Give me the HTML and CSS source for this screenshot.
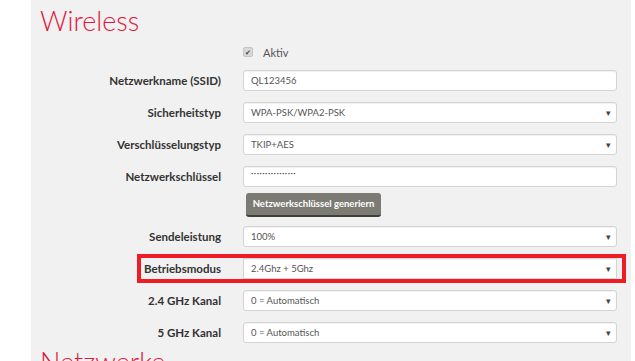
FILE: index.html
```html
<!DOCTYPE html>
<html>
    <head>
        <meta charset="utf-8">
        <link rel="stylesheet" href="styles.css">
        <title>Wireless</title>
    </head>
    <body>
        <div class="panel">
            <h1 class="pageTitle">Wireless</h1>
            <div class="form">
                <div class="row check">
                    <span class="label"></span>
                    <label class="aktiv"><span class="box">&#10004;</span>Aktiv</label>
                </div>
                <div class="row">
                    <span class="label">Netzwerkname (SSID)</span>
                    <div class="field">QL123456</div>
                </div>
                <div class="row">
                    <span class="label">Sicherheitstyp</span>
                    <div class="field select">WPA-PSK/WPA2-PSK</div>
                </div>
                <div class="row">
                    <span class="label">Verschlüsselungstyp</span>
                    <div class="field select">TKIP+AES</div>
                </div>
                <div class="row">
                    <span class="label">Netzwerkschlüssel</span>
                    <div class="field dots">&bull;&bull;&bull;&bull;&bull;&bull;&bull;&bull;&bull;&bull;&bull;&bull;&bull;&bull;&bull;&bull;</div>
                </div>
                <div class="row buttonRow">
                    <span class="label"></span>
                    <div><button type="button" class="generate">Netzwerkschlüssel generiern</button></div>
                </div>
                <div class="row">
                    <span class="label">Sendeleistung</span>
                    <div class="field select">100%</div>
                </div>
                <div class="row marked">
                    <span class="label">Betriebsmodus</span>
                    <div class="field select">2.4Ghz + 5Ghz</div>
                </div>
                <div class="row">
                    <span class="label">2.4 GHz Kanal</span>
                    <div class="field select">0 = Automatisch</div>
                </div>
                <div class="row">
                    <span class="label">5 GHz Kanal</span>
                    <div class="field select">0 = Automatisch</div>
                </div>
            </div>
            <h1 class="pageTitle next">Netzwerke</h1>
        </div>
    </body>
</html>
```

FILE: styles.css
```css
html, body {margin: 0;
            background: #ffffff;
            height: 361px;
            overflow: hidden;}
body {font-family: "Lato", "Open Sans", sans-serif;
      color: #333333;}

.panel {margin-left: 31px;
        width: 600px;
        min-height: 400px;
        background: #f1f1f1;
        padding: 4px 0 0 9px;
        box-sizing: border-box;}

.pageTitle {margin: 0;
            font-weight: 300;
            font-size: 27px;
            line-height: 34px;
            color: #e2173b;}
.next      {margin-top: 2px;}

.form {display: flex;
       flex-direction: column;}

.row {display: grid;
      grid-template-columns: 181px 374px;
      column-gap: 22px;
      align-items: center;
      height: 21px;
      margin-top: 11px;}
.row .label {text-align: right;
             font-weight: bold;
             font-size: 11.5px;}

.check {margin-top: 7px; height: 14px;}
.aktiv {font-size: 11px;
        color: #555555;
        display: flex;
        align-items: center;}
.box {width: 8px; height: 8px;
      border-radius: 2px;
      background: #d8d8d8;
      border: 1px solid #c4c4c4;
      font-size: 7px;
      line-height: 8px;
      text-align: center;
      color: #444444;
      margin-right: 10px;}

.field {height: 21px;
        box-sizing: border-box;
        background: #ffffff;
        border: 1px solid #d4d4d4;
        border-radius: 3px;
        box-shadow: inset 0 1px 1px rgba(0,0,0,0.06);
        font-size: 9.5px;
        line-height: 19px;
        padding-left: 7px;
        color: #555555;
        position: relative;}
.select::after {content: "\25BE";
                position: absolute;
                right: 5px;
                top: 0;
                font-size: 9px;
                color: #444444;}
.dots {font-size: 4px; letter-spacing: 0.5px; line-height: 13px;}

.buttonRow {height: 24px; margin-top: 4px;}
.generate {font-family: inherit;
           font-weight: bold;
           font-size: 9.5px;
           color: #ffffff;
           background: #7b7b73;
           border: none;
           border-bottom: 2px solid #3e3e3a;
           border-radius: 3px;
           height: 24px;
           width: 135px;
           margin-left: 3px;
           padding: 0;}

.marked {outline: 4px solid #ee1c25;
         outline-offset: 0;
         margin-left: 101px;
         grid-template-columns: 80px 374px;
         width: 481px;}
.marked .field {border-radius: 0;}
```
